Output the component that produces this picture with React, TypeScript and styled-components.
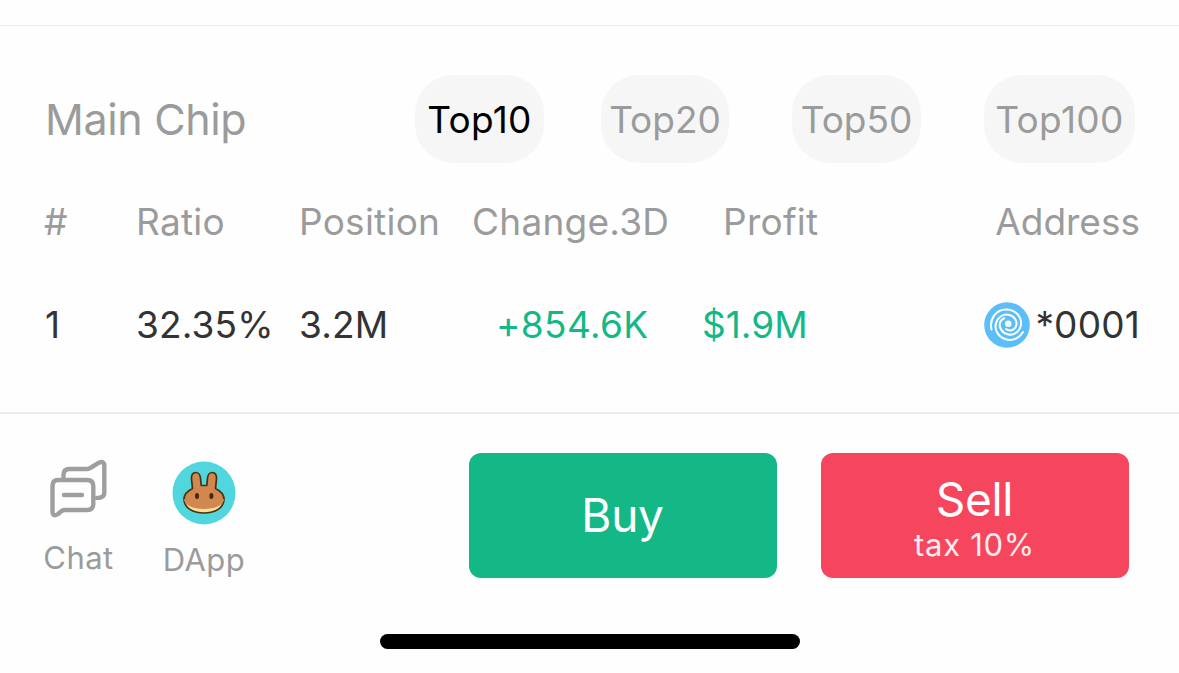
import styled, { createGlobalStyle } from "styled-components";

const App = () => {
    return (
        <>
            <GlobalStyle />
            <Screen>
                <ChipSection>
                    <ChipHeader>
                        <ChipTitle>Main Chip</ChipTitle>
                        <Tabs>
                            <Tab $active $width={129} $spacing={0.3}>Top10</Tab>
                            <Tab $width={128} $gap={57}>Top20</Tab>
                            <Tab $width={129} $gap={63}>Top50</Tab>
                            <Tab $width={151} $gap={63} $spacing={0.4}>Top100</Tab>
                        </Tabs>
                    </ChipHeader>
                    <TableHead>
                        <span>#</span>
                        <span>Ratio</span>
                        <span>Position</span>
                        <span>Change.3D</span>
                        <span>Profit</span>
                        <Address>Address</Address>
                    </TableHead>
                    <TableRow>
                        <span>1</span>
                        <span>32.35%</span>
                        <span>3.2M</span>
                        <Gain $spacing={0.35}>+854.6K</Gain>
                        <Gain>$1.9M</Gain>
                        <Address $spacing={0.2}>
                            <SwirlIcon />
                            *0001
                        </Address>
                    </TableRow>
                </ChipSection>
                <Footer>
                    <Shortcut $width={71}>
                        <ChatIcon />
                        <Label>Chat</Label>
                    </Shortcut>
                    <Shortcut $width={84} $gap={48}>
                        <BunnyIcon />
                        <Label $top={15}>DApp</Label>
                    </Shortcut>
                    <Actions>
                        <TradeButton $color="#14b886" $bottom={2}>Buy</TradeButton>
                        <TradeButton $color="#f6465d" $top={6}>
                            Sell
                            <Tax>tax 10%</Tax>
                        </TradeButton>
                    </Actions>
                </Footer>
                <HomeIndicator />
            </Screen>
        </>
    )
}

const SwirlIcon = () => (
    <svg width="46" height="46" viewBox="0 0 46 46" fill="none" stroke="#fff" strokeWidth="2" strokeLinecap="round">
        <circle cx="23" cy="23" r="22.8" fill="#5bbdf9" stroke="none" />
        <circle cx="24.300" cy="21.800" r="3.200" fill="#fff" stroke="none" />
        <path d="M7.500 27.500C5 17 12 7.500 22 7.500C31 7.500 37.500 14 37 22C36.500 29 30.500 33.500 24.500 32.500C18.500 31.500 14.500 26 16 20.500" />
        <path d="M39 30C35.500 36 29 39 22.500 37.500C14.500 35.500 10 28 12 21C14 14.500 20 11.500 25.500 13C31 14.500 34 20 31.800 24.800C30 28.500 25.500 29.500 22 27" />
        <path d="M16 20.500C16.800 18.200 18.200 17 20.200 16.200" />
    </svg>
)

const ChatIcon = () => (
    <svg width="60" height="60" viewBox="0 0 60 60" fill="none" stroke="#9e9e9e" strokeWidth="4.4" strokeLinecap="round" strokeLinejoin="round">
        <path d="M14.500 18V16Q14.500 10 20.500 10H38Q40 10 42 8.500L50 3.700Q55.300 1.500 55.300 7V34Q55.300 39 48 39" />
        <path d="M9 21H38Q44.300 21 44.300 27V45Q44.300 51 38 51H15.500Q13.500 51 12 52.500L9 55Q3.500 58.500 3.500 52V27Q3.500 21 9 21Z" />
        <path d="M15 36H33" />
    </svg>
)

const BunnyIcon = () => (
    <svg width="64" height="64" viewBox="0 0 64 64">
        <circle cx="32" cy="32" r="31.5" fill="#50d6dc" />
        <path d="M12 38C12 47 21 52 32 52C43 52 52 47 52 38Z" fill="#fbdc98" stroke="#4a300f" strokeWidth="1.700" />
        <path d="M20.500 27.500L19.500 18C18.500 9.500 28 9.500 28.500 17L29.200 24.500H34.800L35.500 17C36 9.500 45.500 9.500 44.500 18L43.500 27.500C48.500 30 52 33.500 52 38C52 44 43 48 32 48C21 48 12 44 12 38C12 33.500 15.500 30 20.500 27.500Z" fill="#d08750" />
        <path d="M12 38C12 33.500 15.500 30 20.500 27.500L19.500 18C18.500 9.500 28 9.500 28.500 17L29.200 24.500H34.800L35.500 17C36 9.500 45.500 9.500 44.500 18L43.500 27.500C48.500 30 52 33.500 52 38" fill="none" stroke="#4a300f" strokeWidth="1.700" strokeLinejoin="round" />
        <ellipse cx="25" cy="35" rx="2" ry="3" fill="#4a240d" />
        <ellipse cx="39.400" cy="35" rx="2" ry="3" fill="#4a240d" />
    </svg>
)

const GlobalStyle = createGlobalStyle`
    * {
        box-sizing: border-box;
    }
    body {
        margin: 0;
        background: #fefefe;
        font-family: Inter, "Liberation Sans", sans-serif;
    }
`

const Screen = styled.div`
    height: 673px;
    padding-top: 25px;
    display: flex;
    flex-direction: column;
    overflow: hidden;
`

const ChipSection = styled.section`
    height: 389px;
    padding: 49px 39px 0 45px;
    border-top: 1px solid #ececec;
    border-bottom: 2px solid #ebebeb;
    color: #9b9b9b;
    font-size: 37px;
`

const ChipHeader = styled.div`
    display: flex;
    justify-content: space-between;
    align-items: center;
    height: 88px;
    padding-right: 5px;
`

const ChipTitle = styled.h2`
    margin: 0 0 1px;
    font-size: 43px;
    font-weight: 400;
    letter-spacing: -0.35px;
`

const Tabs = styled.div`
    display: flex;
`

const Tab = styled.button<{ $active?: boolean; $width: number; $gap?: number; $spacing?: number }>`
    width: ${(props) => props.$width}px;
    height: 88px;
    margin-left: ${(props) => props.$gap ?? 0}px;
    padding: 1px 0 0;
    border: none;
    border-radius: 38px;
    background: #f6f6f6;
    color: ${(props) => (props.$active ? "#000" : "#9b9b9b")};
    font: inherit;
    letter-spacing: ${(props) => props.$spacing ?? 0}px;
`

const TableHead = styled.div`
    display: grid;
    grid-template-columns: 91px 163px 173px 251px 97px 1fr;
    align-items: center;
    height: 45px;
    margin-top: 36px;
    letter-spacing: 0.25px;
    white-space: nowrap;

    > :first-child {
        margin-left: -1px;
    }
`

const TableRow = styled(TableHead)`
    grid-template-columns: 91px 163px 197px 206px 150px 1fr;
    height: 46px;
    margin-top: 57px;
    color: #333;
    letter-spacing: 0.15px;

    > :first-child {
        margin-left: 0;
    }
`

const Gain = styled.span<{ $spacing?: number }>`
    color: #14b886;
    letter-spacing: ${(props) => props.$spacing ?? 0}px;
`

const Address = styled.span<{ $spacing?: number }>`
    display: flex;
    justify-content: flex-end;
    align-items: center;
    gap: 5px;
    height: 45px;
    letter-spacing: ${(props) => props.$spacing ?? 0}px;

    svg {
        flex-shrink: 0;
        margin-top: 1px;
    }
`

const Footer = styled.footer`
    display: flex;
    align-items: flex-start;
    padding: 39px 50px 0 43px;
    height: 220px;
`

const Shortcut = styled.div<{ $width: number; $gap?: number }>`
    display: flex;
    flex-direction: column;
    align-items: center;
    width: ${(props) => props.$width}px;
    margin-left: ${(props) => props.$gap ?? 0}px;
    padding-top: ${(props) => (props.$gap ? 8 : 6)}px;
`

const Label = styled.span<{ $top?: number }>`
    margin-top: ${(props) => props.$top ?? 19}px;
    color: #9b9b9b;
    font-size: 31px;
    line-height: 40px;
    letter-spacing: 0.5px;
`

const Actions = styled.div`
    display: flex;
    gap: 44px;
    margin-left: auto;
`

const TradeButton = styled.button<{ $color: string; $top?: number; $bottom?: number }>`
    display: flex;
    flex-direction: column;
    align-items: center;
    justify-content: center;
    width: 308px;
    height: 125px;
    padding: ${(props) => props.$top ?? 0}px 1px ${(props) => props.$bottom ?? 0}px 0;
    border: none;
    border-radius: 12px;
    background: ${(props) => props.$color};
    color: #fff;
    font: 46px/52px Inter, "Liberation Sans", sans-serif;
    letter-spacing: -0.3px;
`

const Tax = styled.small`
    font-size: 31px;
    line-height: 40px;
    letter-spacing: 0.7px;
    opacity: 0.9;
`

const HomeIndicator = styled.div`
    width: 420px;
    height: 15px;
    margin: 0 auto;
    border-radius: 8px;
    background: #000;
`

export default App
